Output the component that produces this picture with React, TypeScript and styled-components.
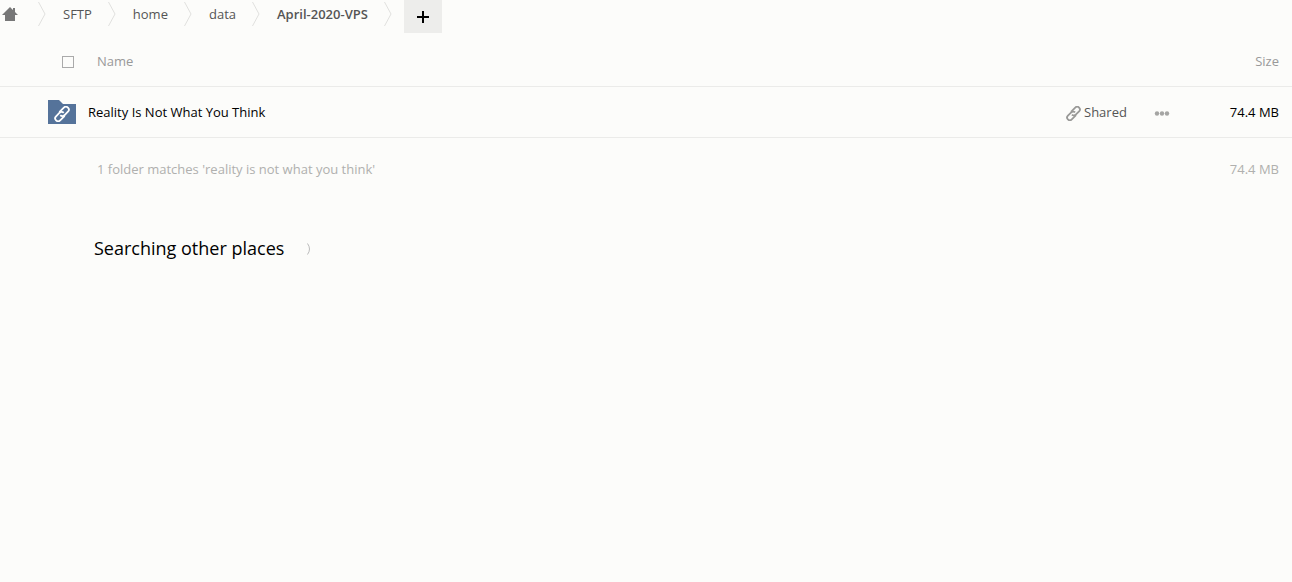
import React from "react";
import styled, { createGlobalStyle } from "styled-components";

const GlobalStyle = createGlobalStyle`
  * { box-sizing: border-box; }
  body {
    margin: 0;
    background: #fcfcfa;
    color: #000;
    font-family: "Open Sans", "Noto Sans", sans-serif;
    font-size: 13px;
    line-height: 20px;
  }
`;

const Page = styled.main`
  min-height: 100vh;
`;

const Controls = styled.nav`
  display: flex;
  align-items: flex-start;
  height: 36px;
`;

const Crumbs = styled.ol`
  display: flex;
  margin: 0;
  padding: 0;
  list-style: none;
`;

const Crumb = styled.li`
  display: flex;
  align-items: center;
  height: 28px;
`;

const CrumbLink = styled.a<{ $current?: boolean }>`
  padding: 0 16px 0 17px;
  color: #555;
  font-weight: ${(p) => (p.$current ? 600 : 400)};
  text-decoration: none;
`;

const HomeLink = styled.a`
  display: flex;
  padding: 0 20px 0 2px;
`;

const Chevron = styled.svg`
  display: block;
  width: 8px;
  height: 26px;
  fill: none;
  stroke: #e0e0de;
`;

const AddButton = styled.button`
  display: flex;
  align-items: center;
  justify-content: center;
  width: 38px;
  height: 33px;
  margin-left: 12px;
  padding: 0;
  border: 0;
  background: #ededeb;
`;

const FileTable = styled.table`
  width: 100%;
  border-collapse: collapse;
  table-layout: fixed;
`;

const Row = styled.tr<{ $height: number }>`
  height: ${(p) => p.$height}px;
  border-bottom: 1px solid #ebebe9;
`;

const SummaryRow = styled.tr`
  height: 63px;
  color: #b0b0ae;
`;

const HeadCell = styled.th<{ $width?: number; $align?: string }>`
  width: ${(p) => (p.$width ? `${p.$width}px` : "auto")};
  padding: 0 13px 0 9px;
  color: #999;
  font-weight: 400;
  text-align: ${(p) => p.$align ?? "left"};
`;

const SelectCell = styled.th`
  width: 88px;
  padding: 2px 12px 0 62px;
`;

const Checkbox = styled.input`
  display: block;
  appearance: none;
  width: 12px;
  height: 12px;
  margin: 0;
  border: 1px solid #aaa;
  background: transparent;
`;

const IconCell = styled.td`
  padding: 0 12px 0 48px;
`;

const NameCell = styled.td`
  padding: 0;
`;

const FileLink = styled.a`
  color: #000;
  text-decoration: none;
`;

const ActionCell = styled.td`
  padding: 0;
`;

const SizeCell = styled.td`
  padding: 0 13px 0 0;
  text-align: right;
`;

const SummaryCell = styled.td`
  padding: 0 9px;
`;

const ShareButton = styled.button`
  display: flex;
  align-items: center;
  gap: 3px;
  padding: 0;
  border: 0;
  background: none;
  color: #555;
  font: inherit;
`;

const MenuButton = styled.button`
  display: flex;
  padding: 4px 0 0;
  border: 0;
  background: none;
`;

const Icon = styled.svg`
  display: block;
  flex: none;
`;

const Searching = styled.section`
  display: flex;
  align-items: center;
  gap: 22px;
  padding: 34px 94px;
`;

const SearchTitle = styled.h2`
  margin: 0;
  font-size: 18px;
  font-weight: 400;
  line-height: 28px;
`;

const Links = () => (
  <g transform="rotate(-45 8 8)">
    <path d="M8.6 11.2H2.2A2.9 2.9 0 0 1 2.2 5.4H7.2A2.9 2.9 0 0 1 10 8.4" />
    <path d="M7.4 4.8H13.8A2.9 2.9 0 0 1 13.8 10.6H8.8A2.9 2.9 0 0 1 6 7.6" />
  </g>
);

const Separator = () => (
  <Chevron viewBox="0 0 8 26" aria-hidden="true">
    <path d="M0.5 1L7 13L0.5 25" />
  </Chevron>
);

const folders = ["SFTP", "home", "data", "April-2020-VPS"];

export default function App() {
  return (
    <Page>
      <GlobalStyle />
      <Controls aria-label="Breadcrumb">
        <Crumbs>
          <Crumb>
            <HomeLink href="#" aria-label="Home">
              <Icon width="16" height="14" viewBox="0 0 16 14" fill="#777">
                <path d="M8 0L11 3V1H13V5L16 8H13V14H3V8H0Z" />
              </Icon>
            </HomeLink>
            <Separator />
          </Crumb>
          {folders.map((name, i) => (
            <Crumb key={name}>
              <CrumbLink href="#" $current={i === folders.length - 1}>
                {name}
              </CrumbLink>
              <Separator />
            </Crumb>
          ))}
        </Crumbs>
        <AddButton aria-label="New">
          <Icon width="12" height="12" viewBox="0 0 12 12">
            <path d="M5 0H7V5H12V7H7V12H5V7H0V5H5Z" />
          </Icon>
        </AddButton>
      </Controls>

      <FileTable>
        <thead>
          <Row $height={50}>
            <SelectCell>
              <Checkbox type="checkbox" aria-label="Select all" />
            </SelectCell>
            <HeadCell>Name</HeadCell>
            <HeadCell $width={88} />
            <HeadCell $width={38} />
            <HeadCell $width={100} $align="right">Size</HeadCell>
          </Row>
        </thead>
        <tbody>
          <Row $height={51}>
            <IconCell>
              <Icon width="28" height="24" viewBox="0 0 28 24">
                <path d="M0 0H11L15 4H28V24H0Z" fill="#55739a" />
                <svg x="6" y="6" width="16" height="16" viewBox="0 0 16 16" fill="none" stroke="#fff" strokeWidth="1.8">
                  <Links />
                </svg>
              </Icon>
            </IconCell>
            <NameCell>
              <FileLink href="#">Reality Is Not What You Think</FileLink>
            </NameCell>
            <ActionCell>
              <ShareButton>
                <Icon width="15" height="18" viewBox="0 -3 15 18" fill="none" stroke="#999997" strokeWidth="1.9">
                  <svg width="15" height="15" viewBox="0 0 16 16">
                    <Links />
                  </svg>
                </Icon>
                Shared
              </ShareButton>
            </ActionCell>
            <ActionCell>
              <MenuButton aria-label="More actions">
                <Icon width="16" height="5" viewBox="0 0 16 5" fill="#a5a5a3">
                  <circle cx="3" cy="2.5" r="2.2" />
                  <circle cx="8" cy="2.5" r="2.2" />
                  <circle cx="13" cy="2.5" r="2.2" />
                </Icon>
              </MenuButton>
            </ActionCell>
            <SizeCell>74.4 MB</SizeCell>
          </Row>
        </tbody>
        <tfoot>
          <SummaryRow>
            <td />
            <SummaryCell>1 folder matches 'reality is not what you think'</SummaryCell>
            <td />
            <td />
            <SizeCell>74.4 MB</SizeCell>
          </SummaryRow>
        </tfoot>
      </FileTable>

      <Searching aria-live="polite">
        <SearchTitle>Searching other places</SearchTitle>
        <Icon width="5" height="14" viewBox="0 0 5 14" fill="none" stroke="#bbb">
          <path d="M1.5 2.5Q5.5 8 1.5 13.5" />
        </Icon>
      </Searching>
    </Page>
  );
}
